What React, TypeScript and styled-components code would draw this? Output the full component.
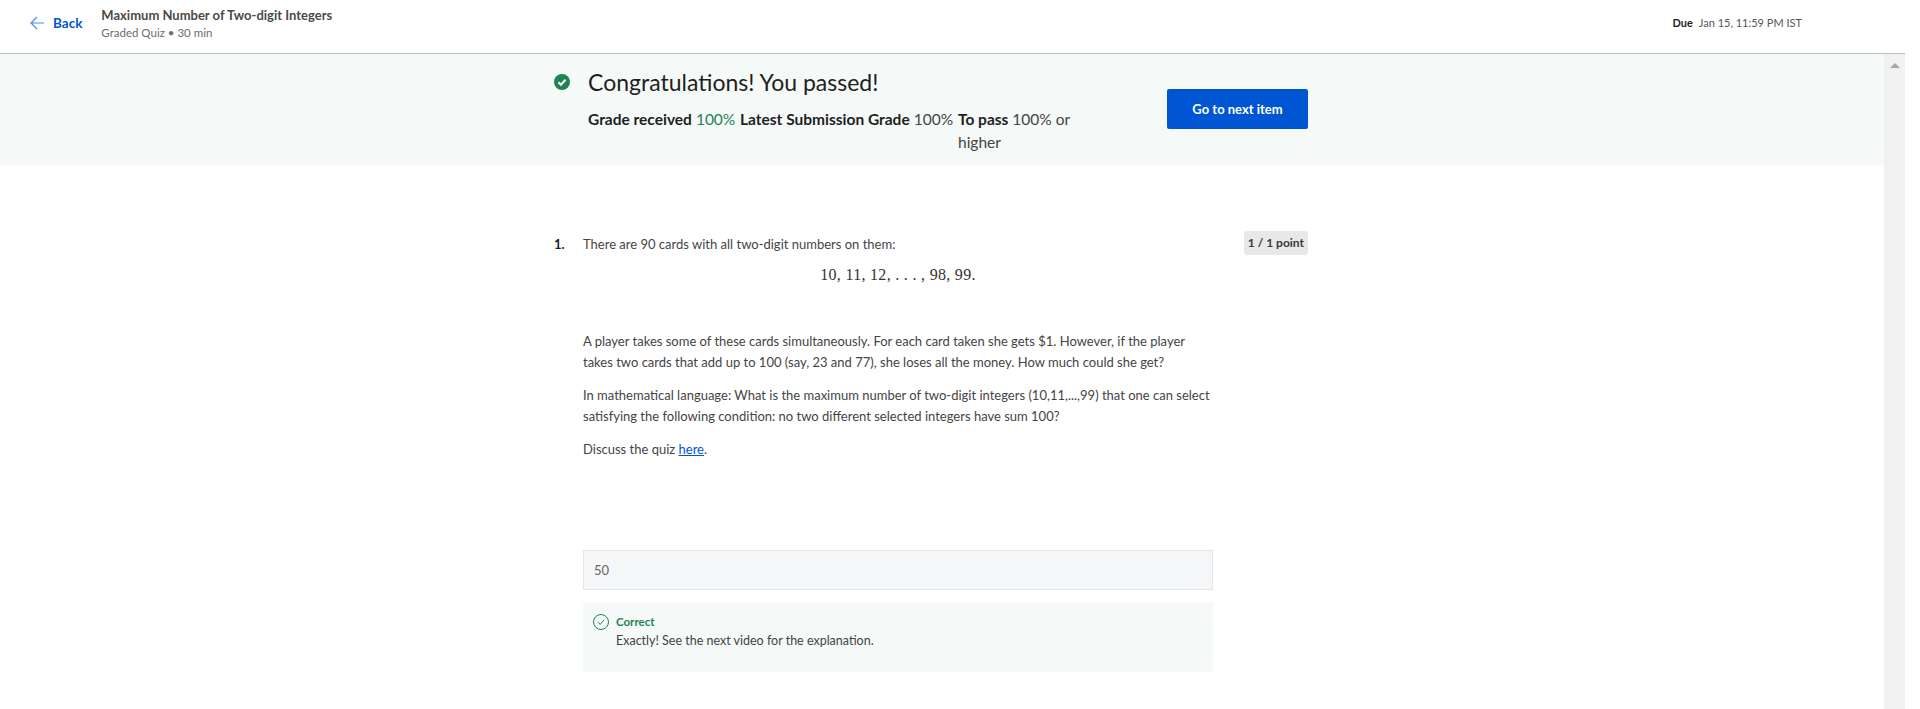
import React from 'react'
import styled, { createGlobalStyle } from 'styled-components'

const GlobalStyle = createGlobalStyle`
  html, body { margin: 0; padding: 0; height: 100%; background: #fff; overflow: hidden; }
  body { font-family: Lato, "Open Sans", sans-serif; color: #373a3c; }
`

const Page = styled.div`
  height: 709px;
  display: flex;
  flex-direction: column;
  overflow: hidden;
`

const Header = styled.header`
  height: 53px;
  width: 1905px;
  box-sizing: border-box;
  flex: none;
  display: flex;
  align-items: flex-start;
  border-bottom: 1px solid #bdbdbd;
  height: 54px;
`

const BackLink = styled.a`
  display: flex;
  align-items: center;
  gap: 9px;
  margin: 14px 19px 0 30px;
  font-size: 13.5px;
  font-weight: 700;
  color: #0056d2;
  height: 18px;
`

const HeaderTitle = styled.div`
  padding-top: 6px;
  flex: 1;
`

const QuizName = styled.div`
  font-size: 13px;
  line-height: 18px;
  font-weight: 700;
  color: #4a4a4a;
`

const QuizMeta = styled.div`
  font-size: 11.5px;
  line-height: 18px;
  color: #6b6b6b;
`

const DueText = styled.div`
  margin: 14px 103px 0 0;
  font-size: 11px;
  line-height: 18px;
  color: #555;
  b { color: #1f1f1f; margin-right: 6px; }
`

const Body = styled.div`
  flex: 1;
  display: flex;
  min-height: 0;
`

const Scroller = styled.main`
  flex: 1;
  overflow: hidden;
`

const Scrollbar = styled.div`
  width: 21px;
  flex: none;
  background: #f1f1f1;
  margin-right: 15px;
  display: flex;
  justify-content: center;
  padding-top: 9px;
  box-sizing: border-box;
  &::before {
    content: '';
    width: 0;
    height: 0;
    border: 5px solid transparent;
    border-top: 0;
    border-bottom: 5px solid #a6a6a6;
  }
`

const Banner = styled.section`
  height: 111px;
  background: #f5f9f8;
  padding-left: 554px;
  display: flex;
  box-sizing: border-box;
`

const BannerMain = styled.div`
  width: 613px;
  padding-top: 12px;
`

const PassedTitle = styled.h2`
  display: flex;
  align-items: center;
  gap: 18px;
  margin: 0;
  font-size: 23px;
  line-height: 32px;
  font-weight: 400;
  color: #1f1f1f;
`

const Stats = styled.div`
  display: flex;
  margin: 10px 0 0 34px;
`

const Stat = styled.div<{ $width: number }>`
  width: ${p => p.$width}px;
  font-size: 15.5px;
  line-height: 23px;
  color: #444;
  b { font-weight: 700; color: #1f1f1f; }
`

const GreenValue = styled.span`
  color: #1f8354;
`

const NextButton = styled.button`
  width: 141px;
  height: 40px;
  margin-top: 35px;
  background: #0056d2;
  color: #fff;
  border: 0;
  border-radius: 2px;
  font-family: inherit;
  font-size: 13px;
  font-weight: 700;
`

const QuestionWrap = styled.article`
  width: 754px;
  margin-left: 554px;
  padding-top: 66px;
`

const QuestionHead = styled.div`
  display: flex;
  justify-content: space-between;
  align-items: flex-start;
`

const QuestionIntro = styled.p`
  margin: 0;
  padding-top: 3px;
  font-size: 13px;
  line-height: 21px;
  color: #444;
  b { display: inline-block; width: 29px; color: #1f1f1f; }
`

const PointBadge = styled.span`
  height: 24px;
  line-height: 24px;
  padding: 0 4px;
  border-radius: 3px;
  background: #e8e8e8;
  font-size: 12px;
  font-weight: 700;
  color: #373a3c;
  white-space: nowrap;
`

const MathLine = styled.div`
  width: 630px;
  margin: 8px 0 0 29px;
  text-align: center;
  font-family: "Liberation Serif", serif;
  font-size: 16px;
  line-height: 24px;
  color: #333;
  letter-spacing: 0.3px;
`

const Prose = styled.div`
  width: 630px;
  margin: 44px 0 0 29px;
  font-size: 13px;
  line-height: 21px;
  color: #444;
  p { margin: 0 0 12px; }
  a { color: #0056d2; text-decoration: underline; }
`

const AnswerBox = styled.div`
  width: 630px;
  height: 40px;
  box-sizing: border-box;
  margin: 90px 0 0 29px;
  padding-left: 10px;
  background: #f5f6f8;
  border: 1px solid #e3e5e8;
  font-size: 13px;
  line-height: 38px;
  color: #666;
`

const Feedback = styled.div`
  width: 630px;
  height: 69px;
  box-sizing: border-box;
  margin: 13px 0 0 29px;
  padding: 10px 10px;
  background: #f5f9f8;
  display: flex;
  gap: 7px;
`

const FeedbackIcon = styled.svg`
  width: 16px;
  height: 16px;
  margin-top: 1px;
  flex: none;
`

const FeedbackLabel = styled.div`
  font-size: 11.5px;
  line-height: 18px;
  font-weight: 700;
  color: #1f8354;
`

const FeedbackText = styled.div`
  font-size: 12.5px;
  line-height: 20px;
  color: #444;
`

const BackArrow = () => (
  <svg width="14" height="14" viewBox="0 0 14 14" fill="none" stroke="#4a8be8" strokeWidth="1.2">
    <path d="M14 7H1M7 1L1 7l6 6" />
  </svg>
)

const PassIcon = () => (
  <svg width="16" height="16" viewBox="0 0 16 16">
    <circle cx="8" cy="8" r="8" fill="#1f8354" />
    <path d="M4.4 8.2l2.5 2.5 4.7-5" fill="none" stroke="#fff" strokeWidth="2" />
  </svg>
)

export default function App() {
  return (
    <Page>
      <GlobalStyle />
      <Header>
        <BackLink><BackArrow />Back</BackLink>
        <HeaderTitle>
          <QuizName>Maximum Number of Two-digit Integers</QuizName>
          <QuizMeta>Graded Quiz • 30 min</QuizMeta>
        </HeaderTitle>
        <DueText><b>Due</b>Jan 15, 11:59 PM IST</DueText>
      </Header>
      <Body>
        <Scroller>
          <Banner>
            <BannerMain>
              <PassedTitle><PassIcon />Congratulations! You passed!</PassedTitle>
              <Stats>
                <Stat $width={152}><b>Grade received</b> <GreenValue>100%</GreenValue></Stat>
                <Stat $width={218}><b>Latest Submission Grade</b> 100%</Stat>
                <Stat $width={125}><b>To pass</b> 100% or higher</Stat>
              </Stats>
            </BannerMain>
            <NextButton>Go to next item</NextButton>
          </Banner>
          <QuestionWrap>
            <QuestionHead>
              <QuestionIntro><b>1.</b>There are 90 cards with all two-digit numbers on them:</QuestionIntro>
              <PointBadge>1 / 1 point</PointBadge>
            </QuestionHead>
            <MathLine>10, 11, 12, . . . , 98, 99.</MathLine>
            <Prose>
              <p>A player takes some of these cards simultaneously. For each card taken she gets $1. However, if the player takes two cards that add up to 100 (say, 23 and 77), she loses all the money. How much could she get?</p>
              <p>In mathematical language: What is the maximum number of two-digit integers (10,11,...,99) that one can select satisfying the following condition: no two different selected integers have sum 100?</p>
              <p>Discuss the quiz <a>here</a>.</p>
            </Prose>
            <AnswerBox>50</AnswerBox>
            <Feedback>
              <FeedbackIcon viewBox="0 0 16 16" fill="none" stroke="#1f8354">
                <circle cx="8" cy="8" r="7.5" />
                <path d="M5 8.2l2.2 2.2L11 6" />
              </FeedbackIcon>
              <div>
                <FeedbackLabel>Correct</FeedbackLabel>
                <FeedbackText>Exactly! See the next video for the explanation.</FeedbackText>
              </div>
            </Feedback>
          </QuestionWrap>
        </Scroller>
        <Scrollbar />
      </Body>
    </Page>
  )
}
